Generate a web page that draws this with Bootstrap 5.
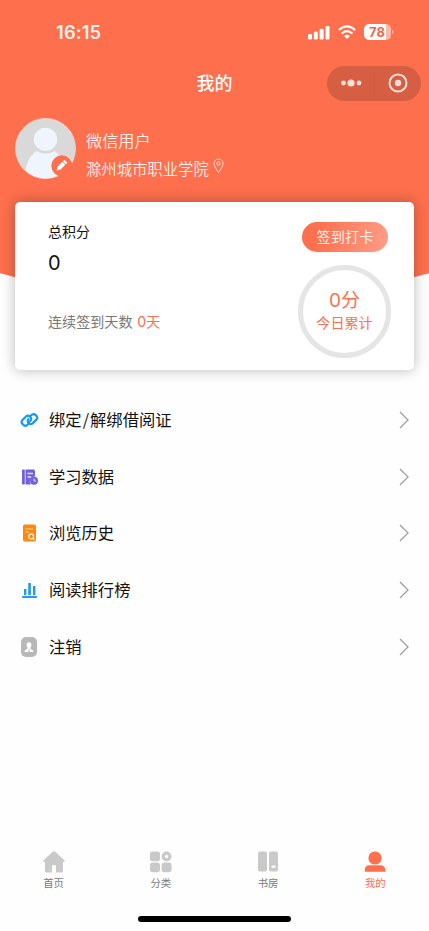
<!DOCTYPE html>
<html lang="zh-CN">
<head>
<meta charset="utf-8">
<meta name="viewport" content="width=device-width, initial-scale=1">
<title>我的</title>
<link href="https://cdn.jsdelivr.net/npm/bootstrap@5.3.0/dist/css/bootstrap.min.css" rel="stylesheet">
<style>
:root{--brand:#fd6f4d}
body{font-family:"Noto Sans CJK SC",sans-serif;height:931px;line-height:1;color:#111;background:#fefefe;overflow:hidden}
svg{display:block;flex:none}
.hero{height:202px;color:#fff0ec;isolation:isolate}
.hero::before{content:"";position:absolute;z-index:-1;inset:0 0 -98px;background:var(--brand);clip-path:ellipse(429px 200px at 50% 100px)}
.status{height:64px;padding:0 35px 0 56px}
.clock{font:600 18.3px/20px Inter,sans-serif;letter-spacing:.15px;padding-bottom:1px}
.battery{width:27px;height:16px;border-radius:5px;background:linear-gradient(90deg,#fff 22px,#ffb8a5 22px);color:#e96b4c;font:700 13px/16px Inter,sans-serif;padding-left:5px}
.titlebar{height:38px}
.page-title{font-size:18px;font-weight:500;line-height:37px;color:#fff}
.capsule{width:94px;height:35px;background:#d65e42;right:8px;top:2px}
.profile{padding:16px 15px 0;gap:10px}
.nick{font-size:16.2px;line-height:24px;font-weight:350;margin-top:10px}
.school{font-size:15.35px;line-height:24px;font-weight:350;margin-top:4px}
.num{font-family:Inter,sans-serif}
.score{height:167.5px;margin:0 15px;border:0;border-radius:5px;background:#fff;box-shadow:0 0 14px rgba(0,0,0,.28);padding:0 23px 0 33px}
.label-total{font-size:14px;line-height:20px;margin-top:19px}
.total{font-size:20px;line-height:28px;margin-top:8px}
.streak{font-size:14.1px;line-height:20px;margin-top:34px;color:#777}
.streak .brand{margin-left:1.5px}
.brand{color:var(--brand)}
.checkin{width:86px;height:30px;margin:20px 0 0 1px;font-size:14.2px;line-height:29px;color:#fff0ec;background:linear-gradient(100deg,#fd6f4d 15%,#ff9d87)}
.ring{width:93px;height:93px;border:5px solid #e5e5e5;margin-top:13px;padding-bottom:5px}
.today-num{font-size:19px;line-height:23px}
.today-label{font-size:14.1px;line-height:20px}
.menu{padding:22px 19px 0 20px}
.entry{height:56.8px;font-size:16.3px;line-height:24px;color:#111}
.entry span{margin-top:-2px}
.entry .ico{width:19px;margin-right:10px}
.slash{display:inline-block;width:8.500px;text-align:center;margin:0}
.tabs{height:57px;font-size:10.4px}
.tabs a{color:#7b7b7b;line-height:14px}
.tabs svg{margin-bottom:2px}
.tabs a.current{color:var(--brand)}
.homebar{width:153px;height:6px;background:#000;margin:9px auto 9px}
</style>
<script src="https://cdn.jsdelivr.net/npm/bootstrap@5.3.0/dist/js/bootstrap.bundle.min.js"></script>
</head>
<body class="d-flex flex-column">
<header class="hero position-relative">
  <div class="status d-flex align-items-center justify-content-between">
    <span class="clock">16:15</span>
    <div class="d-flex align-items-center">
      <svg width="22" height="15" viewBox="0 0 22 15" fill="#fff"><rect y="9" width="4" height="5.500" rx="1.200"/><rect x="5.800" y="6.500" width="4" height="8" rx="1.200"/><rect x="11.600" y="3.700" width="4" height="10.800" rx="1.200"/><rect x="17.500" y="1" width="4" height="13.500" rx="1.200"/></svg>
      <svg class="ms-2" width="18" height="14" viewBox="0 0 18 14" fill="none" stroke="#fff" stroke-width="2.300"><path d="M.9 5Q9-2.200 17.100 5M3.700 8.500Q9 3.700 14.300 8.500"/><path d="M6 11Q9 8.400 12 11L9 14Z" fill="#fff" stroke="none"/></svg>
      <div class="battery ms-2">78</div>
      <svg width="3" height="6" viewBox="0 0 3 6"><path d="M1 1Q4 3 1 5Z" fill="#ffb8a5"/></svg>
    </div>
  </div>
  <div class="titlebar position-relative text-center">
    <h1 class="page-title m-0">我的</h1>
    <div class="capsule rounded-pill position-absolute">
      <svg width="94" height="35" viewBox="0 0 94 35" fill="#ffdfd7"><circle cx="16.500" cy="17" r="2.400"/><circle cx="24" cy="17" r="3.600"/><circle cx="32" cy="17" r="2.400"/><path d="M47 7v21" stroke="#d25a3f"/><circle cx="71" cy="17" r="8.500" fill="none" stroke="#ffdfd7" stroke-width="2"/><circle cx="71" cy="17" r="3.200"/></svg>
    </div>
  </div>
  <div class="profile d-flex">
    <svg width="61" height="61" viewBox="0 0 60 60"><defs><clipPath id="round"><circle cx="30" cy="30" r="29.400"/></clipPath></defs><circle cx="30" cy="30" r="30" fill="#ffc4b5"/><g clip-path="url(#round)"><path d="M0 0h60v60H0z" fill="#d9d9d9"/><circle cx="30" cy="21" r="11.500" fill="#eff5fc"/><path d="M9 61C10 46 14 37 21 32.500q9 5 18 0c7 4.500 12 13.500 13 28.500z" fill="#eff5fc"/></g><circle cx="46" cy="47" r="10.300" fill="#fd6f4d"/><g transform="translate(45.500 47) rotate(45)" fill="#fff"><rect x="-2" y="-6.500" width="4" height="2.200" rx=".7"/><path d="M-2-3.600h4v7L0 6.500-2 3.400z"/></g></svg>
    <div>
      <div class="nick">微信用户</div>
      <div class="school d-flex align-items-center">滁州城市职业学院
        <svg class="ms-1 mb-1" width="11" height="16" viewBox="0 0 11 16" fill="none" stroke="#ffe0d7"><path d="M5.500 14.500C3 10.500 1 8 1 5.500a4.500 4.500 0 0 1 9 0c0 2.500-2 5-4.500 9Z"/><circle cx="5.500" cy="5.500" r="1.700"/></svg>
      </div>
    </div>
  </div>
</header>
<section class="score card flex-row justify-content-between flex-shrink-0">
  <div>
    <div class="label-total">总积分</div>
    <div class="total num">0</div>
    <div class="streak">连续签到天数 <span class="brand"><span class="num">0</span>天</span></div>
  </div>
  <div class="d-flex flex-column align-items-center">
    <a class="checkin rounded-pill text-center text-decoration-none" href="#">签到打卡</a>
    <div class="ring rounded-circle d-flex flex-column align-items-center justify-content-center brand">
      <span class="today-num"><span class="num">0</span>分</span><span class="today-label">今日累计</span>
    </div>
  </div>
</section>
<nav class="menu flex-grow-1">
  <a href="#" class="entry d-flex align-items-center text-decoration-none">
    <svg class="ico" height="20" viewBox="0 0 19 20" fill="none" stroke="#159aef" stroke-width="2.200" stroke-linecap="round" stroke-linejoin="round"><path d="M8.400 13.800 7 15.200Q5.300 16.500 3.500 14.900L2.300 13.700Q.9 12 2.300 10.200L6.200 6.300Q8 4.900 9.600 6.400l.9.900Q11.900 9 10.400 10.800l-1 1"/><path d="M10.400 6 12 4.600Q13.800 3.400 15.500 4.900l1 1Q18 7.600 16.600 9.400l-4 4Q10.800 14.800 9.200 13.500l-.8-.8Q7 11 8.300 9.200"/></svg>
    <span>绑定<span class="slash">/</span>解绑借阅证</span>
    <svg class="ms-auto" width="12" height="20" viewBox="0 0 12 20" fill="none" stroke="#a0a0a0" stroke-width="1.300"><path d="m2 2 8 8-8 8"/></svg>
  </a>
  <a href="#" class="entry d-flex align-items-center text-decoration-none">
    <svg class="ico" height="20" viewBox="0 0 19 20" fill="#7461d8"><rect x="2" y="2.500" width="2.800" height="15" rx=".7"/><path d="M5.500 2.500h8q1.500 0 1.500 1.500v5.500a5 5 0 0 0-4.200 8H5.500z"/><path d="M7.500 6.500h5.500M7.500 10h3.700" stroke="#e2ddfb" stroke-width="1.300"/><circle cx="14" cy="13.800" r="4"/><path d="M14 11.500V14h2" fill="none" stroke="#e2ddfb"/></svg>
    <span>学习数据</span>
    <svg class="ms-auto" width="12" height="20" viewBox="0 0 12 20" fill="none" stroke="#a0a0a0" stroke-width="1.300"><path d="m2 2 8 8-8 8"/></svg>
  </a>
  <a href="#" class="entry d-flex align-items-center text-decoration-none">
    <svg class="ico" height="20" viewBox="0 0 19 20" fill="none"><rect x="3" y="1.500" width="13" height="17" rx="1.800" fill="#fa8a12"/><path d="M5.500 6H13M5.500 9H9" stroke="#ffd19c" stroke-width="1.200"/><circle cx="11.200" cy="13.400" r="2.400" stroke="#ffe7cd" stroke-width="1.300"/><path d="m13 15.200 1.600 1.600" stroke="#ffe7cd" stroke-width="1.300"/></svg>
    <span>浏览历史</span>
    <svg class="ms-auto" width="12" height="20" viewBox="0 0 12 20" fill="none" stroke="#a0a0a0" stroke-width="1.300"><path d="m2 2 8 8-8 8"/></svg>
  </a>
  <a href="#" class="entry d-flex align-items-center text-decoration-none">
    <svg class="ico" height="20" viewBox="0 0 19 20" fill="#2699e8"><rect x="2" y="16" width="15" height="2" rx=".7"/><rect x="4" y="9" width="2.400" height="6.200"/><rect x="8.200" y="3" width="2.700" height="12.200"/><rect x="13" y="6" width="2.400" height="9.200"/></svg>
    <span>阅读排行榜</span>
    <svg class="ms-auto" width="12" height="20" viewBox="0 0 12 20" fill="none" stroke="#a0a0a0" stroke-width="1.300"><path d="m2 2 8 8-8 8"/></svg>
  </a>
  <a href="#" class="entry d-flex align-items-center text-decoration-none">
    <svg class="ico" height="20" viewBox="0 0 19 20"><rect x="1" y="0" width="16" height="20" rx="5" fill="#b8b8b8"/><path d="M9 5.200c3 0 3 3.500 1.200 5.800.3 1.500 3.300 1.400 3.300 4h-9c0-2.600 3-2.500 3.300-4C6 8.700 6 5.200 9 5.200z" fill="#fff"/><path d="m9 11.500-.8 3.500h1.600z" fill="#b8b8b8"/></svg>
    <span>注销</span>
    <svg class="ms-auto" width="12" height="20" viewBox="0 0 12 20" fill="none" stroke="#a0a0a0" stroke-width="1.300"><path d="m2 2 8 8-8 8"/></svg>
  </a>
</nav>
<footer class="flex-shrink-0">
  <nav class="tabs row g-0 text-center">
    <a href="#" class="col d-flex flex-column align-items-center text-decoration-none"><svg width="24" height="24" viewBox="0 0 24 24" fill="#c9c9c9"><path d="M11 1.600q1-.8 2 0l9.400 8.600q1.100 1.800-.9 1.800H21v9.300q0 1.200-1.200 1.200H14V16q0-1-1-1h-2q-1 0-1 1v6.500H4.200Q3 22.500 3 21.300V12h-.5q-2 0-.9-1.800z"/></svg>首页</a>
    <a href="#" class="col d-flex flex-column align-items-center text-decoration-none"><svg width="24" height="24" viewBox="0 0 24 24" fill="#c9c9c9"><rect x="1" y="1.500" width="10" height="9.800" rx="2.800"/><circle cx="17.600" cy="6.400" r="3.300" fill="none" stroke="#c9c9c9" stroke-width="3.300"/><rect x="1" y="12.500" width="10" height="9.800" rx="2.800"/><rect x="12.600" y="12.500" width="10" height="9.800" rx="2.800"/></svg>分类</a>
    <a href="#" class="col d-flex flex-column align-items-center text-decoration-none"><svg width="24" height="24" viewBox="0 0 24 24" fill="#c9c9c9"><rect x="2" y="1.500" width="9" height="20" rx="2"/><rect x="13" y="1.500" width="9" height="20" rx="2"/><rect x="15.500" y="15.500" width="4" height="2.200" rx=".6" fill="#fff"/></svg>书房</a>
    <a href="#" class="col current d-flex flex-column align-items-center text-decoration-none"><svg width="24" height="24" viewBox="0 0 24 24" fill="#fd6f4d"><circle cx="12" cy="8" r="6.600"/><path d="M1.700 21.700v-1.200q0-5.300 5-5.300h10.600q5 0 5 5.300v1.200z"/></svg>我的</a>
  </nav>
  <div class="homebar rounded-pill"></div>
</footer>
</body>
</html>
